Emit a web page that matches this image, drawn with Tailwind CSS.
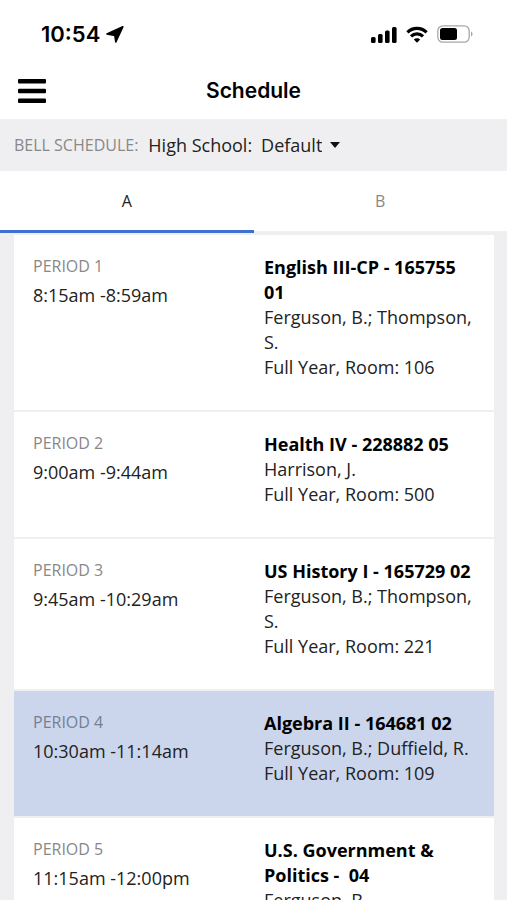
<!DOCTYPE html>
<html lang="en">
<head>
    <meta charset="UTF-8">
    <meta name="viewport" content="width=device-width, initial-scale=1.0">
    <title>Schedule</title>
    <script src="https://cdn.jsdelivr.net/npm/@tailwindcss/browser@4"></script>
</head>
<body class="flex h-screen flex-col overflow-hidden bg-[#efeff1] font-['Open_Sans',sans-serif] text-lg leading-[25px] text-[#222]">
    <!-- Status bar -->
    <div class="flex h-[68px] shrink-0 items-center justify-between bg-white pl-[41px] pr-[34px] text-black">
        <div class="flex items-center gap-[6px] font-['Inter',sans-serif] text-[22px] font-semibold">
            <span>10:54</span>
            <svg class="h-[17px] w-[18px]" viewBox="0 0 18 17" fill="currentColor" stroke="currentColor" stroke-width="1.600" stroke-linejoin="round" aria-hidden="true">
                <path d="M16.800 .8 9.800 16 8.800 9.500 1 7.900Z"/>
            </svg>
        </div>
        <div class="flex items-center">
            <svg class="h-[17px] w-[26px]" viewBox="0 0 26 17" fill="currentColor" aria-hidden="true">
                <rect x="0" y="11" width="4.600" height="6" rx="1.500"/>
                <rect x="7" y="8" width="4.600" height="9" rx="1.500"/>
                <rect x="14" y="4.500" width="4.600" height="12.500" rx="1.500"/>
                <rect x="21" y="1" width="4.600" height="16" rx="1.500"/>
            </svg>
            <svg class="ml-[9px] h-[17px] w-[22px]" viewBox="0 0 22 17" fill="none" stroke="currentColor" stroke-width="3.200" aria-hidden="true">
                <path d="M1.400 6.300a13.600 13.600 0 0 1 19.200 0"/>
                <path d="M5 10.400a8.500 8.500 0 0 1 12 0"/>
                <path d="M11 16.800 7.800 13.600a4.500 4.500 0 0 1 6.400 0Z" fill="currentColor" stroke="none"/>
            </svg>
            <svg class="ml-[9px] h-[18px] w-9" viewBox="0 0 36 18" fill="none" aria-hidden="true">
                <rect x=".8" y=".8" width="31.400" height="16.400" rx="5" stroke="#a8a8a8" stroke-width="1.300"/>
                <rect x="3" y="3" width="17" height="12" rx="2.500" fill="currentColor"/>
                <path d="M34 6.500c2 .8 2 4.200 0 5Z" fill="#a8a8a8"/>
            </svg>
        </div>
    </div>

    <!-- Title bar -->
    <header class="grid h-[51px] shrink-0 grid-cols-[1fr_auto_1fr] items-center bg-white px-[18px] text-black">
        <button type="button" aria-label="Menu" class="w-7 pb-[6px]">
            <svg class="h-6 w-7" viewBox="0 0 28 24" fill="currentColor" aria-hidden="true">
                <rect y="0" width="28" height="4.500" rx="1"/>
                <rect y="9.700" width="28" height="4.500" rx="1"/>
                <rect y="19.500" width="28" height="4.500" rx="1"/>
            </svg>
        </button>
        <h1 class="pb-[6px] font-['Inter',sans-serif] text-[21px] font-semibold">Schedule</h1>
    </header>

    <!-- Bell schedule picker -->
    <div class="flex h-[52px] shrink-0 items-center px-[14px]">
        <span class="text-base text-[#888]">BELL SCHEDULE:</span>
        <label for="bell" class="ml-[10px]">High School:</label>
        <div class="relative ml-[9px]">
            <select id="bell" class="field-sizing-content appearance-none bg-transparent pr-[18px]">
                <option>Default</option>
            </select>
            <svg class="pointer-events-none absolute right-0 top-[9px] h-[6px] w-[10px]" viewBox="0 0 10 6" fill="#111" aria-hidden="true">
                <path d="M0 0h10L5 6Z"/>
            </svg>
        </div>
    </div>

    <!-- Day tabs -->
    <div role="tablist" class="grid h-[62px] shrink-0 grid-cols-2 bg-white text-base">
        <button type="button" role="tab" aria-selected="true" class="border-b-[3px] border-[#3f6fd0]">A</button>
        <button type="button" role="tab" aria-selected="false" class="border-b-2 border-[#efeff1] text-[#888]">B</button>
    </div>

    <!-- Periods -->
    <main class="ml-[14px] mr-[13px] mt-[2px] min-h-0 flex-1 overflow-hidden">
        <ul>
            <li class="grid grid-cols-[231px_1fr] border-b-2 border-[#efeff1] bg-white pt-5 pr-4 pb-[30px] pl-[19px]">
                <div>
                    <h2 class="text-base leading-[22px] text-[#888]">PERIOD 1</h2>
                    <p class="mt-[6px]">8:15am -8:59am</p>
                </div>
                <div>
                    <h3 class="font-bold text-black">English III-CP - 165755 01</h3>
                    <p>Ferguson, B.; Thompson, S.</p>
                    <p>Full Year, Room: 106</p>
                </div>
            </li>
            <li class="grid grid-cols-[231px_1fr] border-b-2 border-[#efeff1] bg-white pt-5 pr-4 pb-[30px] pl-[19px]">
                <div>
                    <h2 class="text-base leading-[22px] text-[#888]">PERIOD 2</h2>
                    <p class="mt-[6px]">9:00am -9:44am</p>
                </div>
                <div>
                    <h3 class="font-bold text-black">Health IV - 228882 05</h3>
                    <p>Harrison, J.</p>
                    <p>Full Year, Room: 500</p>
                </div>
            </li>
            <li class="grid grid-cols-[231px_1fr] border-b-2 border-[#efeff1] bg-white pt-5 pr-4 pb-[30px] pl-[19px]">
                <div>
                    <h2 class="text-base leading-[22px] text-[#888]">PERIOD 3</h2>
                    <p class="mt-[6px]">9:45am -10:29am</p>
                </div>
                <div>
                    <h3 class="font-bold text-black">US History I - 165729 02</h3>
                    <p>Ferguson, B.; Thompson, S.</p>
                    <p>Full Year, Room: 221</p>
                </div>
            </li>
            <!-- Current period -->
            <li class="grid grid-cols-[231px_1fr] border-b-2 border-[#efeff1] bg-[#cbd6ed] pt-5 pr-4 pb-[30px] pl-[19px]">
                <div>
                    <h2 class="text-base leading-[22px] text-[#747f95]">PERIOD 4</h2>
                    <p class="mt-[6px]">10:30am -11:14am</p>
                </div>
                <div>
                    <h3 class="font-bold text-black">Algebra II - 164681 02</h3>
                    <p>Ferguson, B.; Duffield, R.</p>
                    <p>Full Year, Room: 109</p>
                </div>
            </li>
            <li class="grid grid-cols-[231px_1fr] border-b-2 border-[#efeff1] bg-white pt-5 pr-4 pb-[30px] pl-[19px]">
                <div>
                    <h2 class="text-base leading-[22px] text-[#888]">PERIOD 5</h2>
                    <p class="mt-[6px]">11:15am -12:00pm</p>
                </div>
                <div>
                    <h3 class="font-bold text-black">U.S. Government &amp; Politics -&nbsp; 04</h3>
                    <p>Ferguson, B.</p>
                </div>
            </li>
        </ul>
    </main>
</body>
</html>
